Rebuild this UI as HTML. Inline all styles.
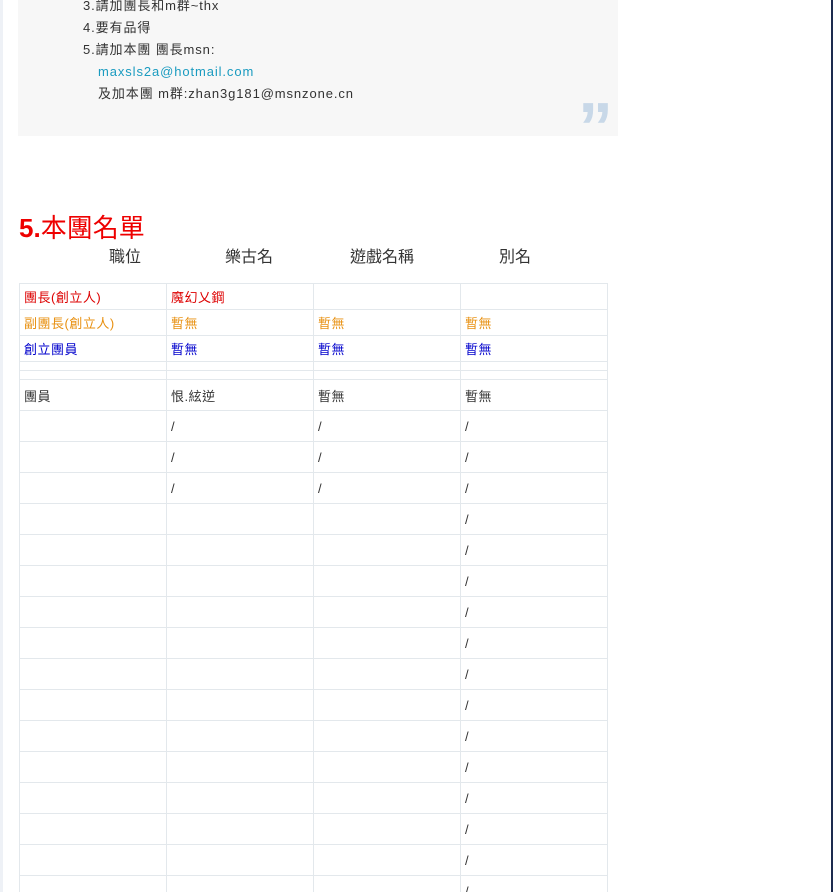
<!DOCTYPE html>
<html><head><meta charset="utf-8"><style>
html,body{margin:0;width:833px;height:892px;overflow:hidden}
body{background:#fff;position:relative;font-family:"Liberation Sans","Noto Sans CJK TC",sans-serif;font-size:13px;color:#333}
.lstrip{position:absolute;left:0;top:0;width:3px;height:892px;background:#eef1f6}
.rline{position:absolute;left:831px;top:0;width:2px;height:892px;background:#1d2b4f}
.box{position:absolute;left:18px;top:-10px;width:600px;height:146px;background:#f7f7f7}
.l{position:absolute;white-space:nowrap;line-height:16px;letter-spacing:0.9px}
.q{position:absolute;left:578px;top:92px;font-family:"Liberation Sans",sans-serif;font-weight:bold;font-size:70px;color:#c8d8e8;line-height:70px;letter-spacing:-4px}
h2{position:absolute;left:19px;top:212px;margin:0;color:#e00;font-size:26px;font-weight:normal;line-height:32px}
h2 b{font-family:"Liberation Sans",sans-serif}
.hd{position:absolute;top:243px;font-size:16px;color:#333}
table{position:absolute;left:19px;top:283px;border-collapse:collapse;table-layout:fixed;width:588px}
td{border:1px solid #e3e8ec;padding:0 0 0 4px;font-size:13px;vertical-align:middle;white-space:nowrap;overflow:hidden;letter-spacing:0.5px}
</style></head><body>
<div class="lstrip"></div><div class="rline"></div>
<div class="box"></div>
<div class="l" style="left:83px;top:-2px">3.請加團長和m群~thx</div>
<div class="l" style="left:83px;top:20px">4.要有品得</div>
<div class="l" style="left:83px;top:42px">5.請加本團 團長msn:</div>
<div class="l" style="left:98px;top:64px;color:#1a9bc0">maxsls2a@hotmail.com</div>
<div class="l" style="left:98px;top:86px">及加本團 m群:zhan3g181@msnzone.cn</div>
<div class="q">”</div>
<h2><b>5.</b>本團名單</h2>
<div class="hd" style="left:109px">職位</div>
<div class="hd" style="left:225px">樂古名</div>
<div class="hd" style="left:350px">遊戲名稱</div>
<div class="hd" style="left:499px">別名</div>
<table>
<colgroup><col style="width:147px"><col style="width:147px"><col style="width:147px"><col style="width:147px"></colgroup>
<tr style="height:26px;color:#d00"><td>團長(創立人)</td><td>魔幻乂鋼</td><td></td><td></td></tr>
<tr style="height:26px;color:#e89010"><td>副團長(創立人)</td><td>暫無</td><td>暫無</td><td>暫無</td></tr>
<tr style="height:26px;color:#0000cc"><td>創立團員</td><td>暫無</td><td>暫無</td><td>暫無</td></tr>
<tr style="height:9px"><td></td><td></td><td></td><td></td></tr>
<tr style="height:9px"><td></td><td></td><td></td><td></td></tr>
<tr style="height:31px"><td>團員</td><td>恨.絃逆</td><td>暫無</td><td>暫無</td></tr>
<tr style="height:31px"><td></td><td>/</td><td>/</td><td>/</td></tr>
<tr style="height:31px"><td></td><td>/</td><td>/</td><td>/</td></tr>
<tr style="height:31px"><td></td><td>/</td><td>/</td><td>/</td></tr>
<tr style="height:31px"><td></td><td></td><td></td><td>/</td></tr>
<tr style="height:31px"><td></td><td></td><td></td><td>/</td></tr>
<tr style="height:31px"><td></td><td></td><td></td><td>/</td></tr>
<tr style="height:31px"><td></td><td></td><td></td><td>/</td></tr>
<tr style="height:31px"><td></td><td></td><td></td><td>/</td></tr>
<tr style="height:31px"><td></td><td></td><td></td><td>/</td></tr>
<tr style="height:31px"><td></td><td></td><td></td><td>/</td></tr>
<tr style="height:31px"><td></td><td></td><td></td><td>/</td></tr>
<tr style="height:31px"><td></td><td></td><td></td><td>/</td></tr>
<tr style="height:31px"><td></td><td></td><td></td><td>/</td></tr>
<tr style="height:31px"><td></td><td></td><td></td><td>/</td></tr>
<tr style="height:31px"><td></td><td></td><td></td><td>/</td></tr>
<tr style="height:31px"><td></td><td></td><td></td><td>/</td></tr>
</table>
</body></html>
